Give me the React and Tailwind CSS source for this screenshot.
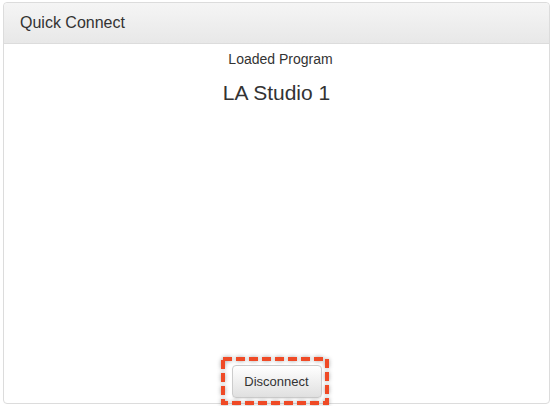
import React from 'react';

function Annotation() {
  // dashed highlight drawn over the button
  return (
    <svg
      className="pointer-events-none absolute -left-[11px] -top-[8px] h-[48px] w-[108px] drop-shadow-[0_0_2px_rgba(0,0,0,0.35)]"
      viewBox="0 0 108 48"
    >
      <rect x="2" y="2" width="104" height="44" fill="none" stroke="#ef4a26" strokeWidth="4" strokeDasharray="9 4" />
    </svg>
  );
}

export default function App() {
  return (
    <div className="h-[406px] bg-white px-[3px] pt-[2px] pb-[2px] font-['Liberation_Sans',Arial,sans-serif] text-[#333]">
      <div className="flex h-full flex-col rounded border border-[#dcdcdc]">
        <div className="flex h-[41px] items-center rounded-t border-b border-[#dcdcdc] bg-gradient-to-b from-[#f5f5f5] to-[#e8e8e8] px-[16px] text-[16px]">
          Quick Connect
        </div>
        <div className="flex flex-1 flex-col items-center">
          <div className="ml-[8px] mt-[5px] text-[14px] leading-[20px]">Loaded Program</div>
          <div className="mt-[11px] text-[21px] leading-[26px]">LA Studio 1</div>
          <div className="flex-1" />
          <div className="relative mb-[5px]">
            <button className="h-[33px] w-[90px] rounded border border-[#ccc] bg-gradient-to-b from-white to-[#e0e0e0] text-[13px] text-[#333] shadow-[inset_0_1px_0_rgba(255,255,255,0.15),0_1px_1px_rgba(0,0,0,0.075)]">
              Disconnect
            </button>
            <Annotation />
          </div>
        </div>
      </div>
    </div>
  );
}
